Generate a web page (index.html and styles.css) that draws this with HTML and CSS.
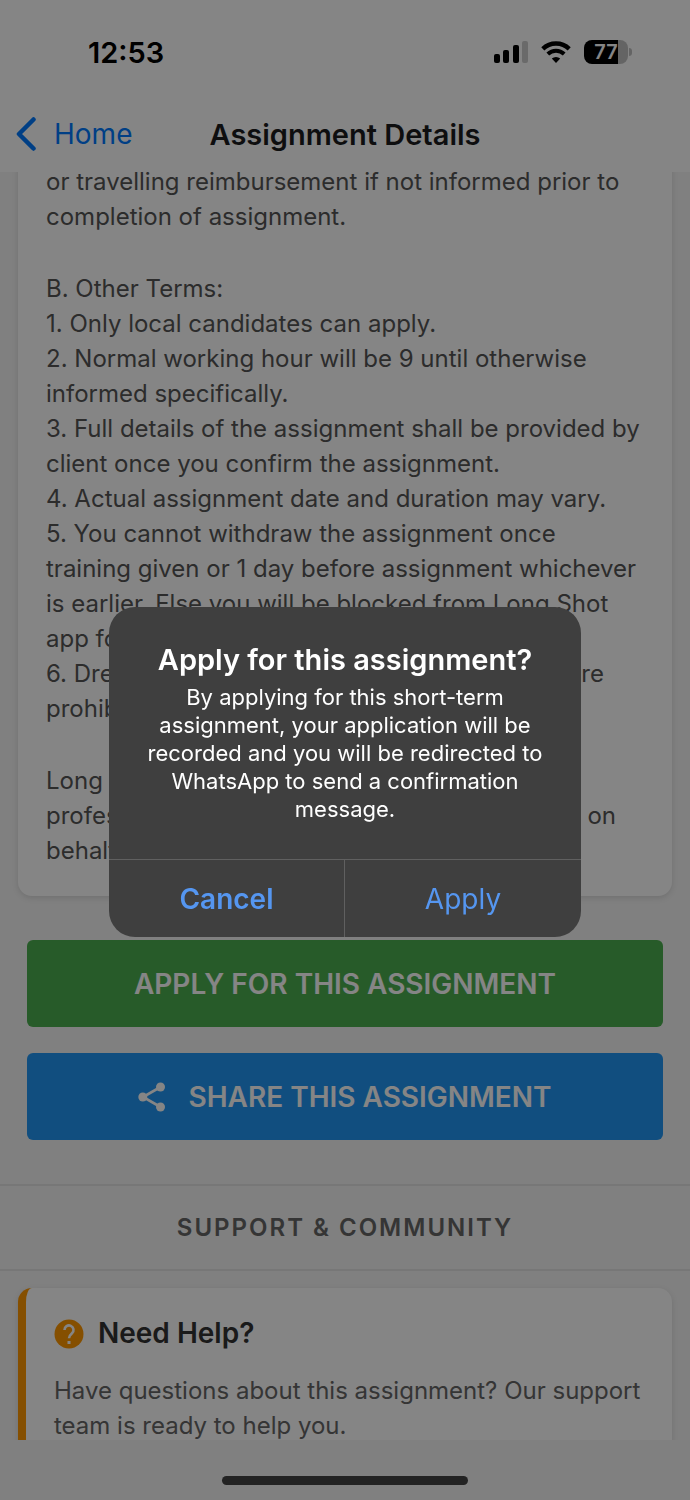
FILE: index.html
```html
<!DOCTYPE html>
<html lang="en">

<head>
    <meta charset="UTF-8" />
    <meta name="viewport" content="width=device-width, initial-scale=1.0" />
    <title>Assignment Details</title>
    <link rel="stylesheet" href="styles.css">
</head>

<body>
    <!-- Status bar -->
    <div class="status-bar">
        <span class="time">12:53</span>
        <div class="status-icons">
            <svg width="34" height="22" viewBox="0 0 34 22">
                <rect x="0" y="13" width="6" height="9" rx="2" />
                <rect x="9" y="9" width="6" height="13" rx="2" />
                <rect x="19" y="4" width="6" height="18" rx="2" />
                <rect x="28" y="0" width="6" height="22" rx="2" fill="#000" opacity="0.2" />
            </svg>
            <svg width="30" height="22" viewBox="0 0 30 22">
                <path d="M1.800 7.800a19 19 0 0 1 26.400 0" fill="none" stroke="#000" stroke-width="4.400" />
                <path d="M6.800 13a12 12 0 0 1 16.400 0" fill="none" stroke="#000" stroke-width="4" />
                <path d="M15 22l-4.200-4.400a6.200 6.200 0 0 1 8.400 0z" />
            </svg>
            <div class="battery"><span>77</span></div>
        </div>
    </div>

    <!-- Navigation -->
    <header class="nav-bar">
        <a class="back" href="#">
            <svg width="20" height="34" viewBox="0 0 20 34">
                <path d="M17.500 2.500L3 17l14.500 14.500" fill="none" stroke="currentColor" stroke-width="4.500" stroke-linecap="round" stroke-linejoin="round" />
            </svg>
            Home
        </a>
        <h1>Assignment Details</h1>
    </header>

    <main class="content">
        <section class="card terms">
            <p>or travelling reimbursement if not informed prior to<br />completion of assignment.</p>
            <div>
                <p>B. Other Terms:</p>
                <p>1. Only local candidates can apply.</p>
                <p>2. Normal working hour will be 9 until otherwise<br />informed specifically.</p>
                <p>3. Full details of the assignment shall be provided by<br />client once you confirm the assignment.</p>
                <p>4. Actual assignment date and duration may vary.</p>
                <p>5. You cannot withdraw the assignment once<br />training given or 1 day before assignment whichever<br />is earlier. Else you will be blocked from Long Shot<br />app for future.</p>
                <p class="split"><span>6. Dress code</span><span class="end-are">are</span></p>
                <p>prohibited.</p>
            </div>
            <div>
                <p>Long Shot</p>
                <p class="split"><span>professional</span><span class="end-on">on</span></p>
                <p>behalf.</p>
            </div>
        </section>

        <div class="actions">
            <button class="btn btn-apply">APPLY FOR THIS ASSIGNMENT</button>
            <button class="btn btn-share">
                <svg width="28" height="30" viewBox="0 0 28 30">
                    <path d="M22.500 5L5 15l17.500 10" fill="none" stroke="currentColor" stroke-width="2.600" />
                    <circle cx="22.500" cy="5" r="4.500" />
                    <circle cx="4.800" cy="15" r="4.500" />
                    <circle cx="22.500" cy="25" r="4.500" />
                </svg>
                SHARE THIS ASSIGNMENT
            </button>
        </div>

        <h2 class="section-title">SUPPORT &amp; COMMUNITY</h2>

        <section class="card help">
            <h3>
                <svg width="30" height="30" viewBox="0 0 30 30">
                    <circle cx="15" cy="15" r="14.500" fill="#ff9800" />
                    <path d="M10.500 11a4.500 4.500 0 1 1 7.500 3.300c-1.800 1.600-3 2.400-3 5" fill="none" stroke="#fff" stroke-width="2.600" />
                    <rect x="13.500" y="22" width="3" height="3" fill="#fff" />
                </svg>
                Need Help?
            </h3>
            <p>Have questions about this assignment? Our support<br />team is ready to help you.</p>
        </section>
    </main>

    <footer class="home-area">
        <div class="home-indicator"></div>
    </footer>

    <!-- Confirmation dialog -->
    <div class="backdrop">
        <div class="dialog" role="alertdialog" aria-labelledby="dialogTitle" aria-describedby="dialogText">
            <div class="dialog-body">
                <h2 id="dialogTitle">Apply for this assignment?</h2>
                <p id="dialogText">By applying for this short-term<br />assignment, your application will be<br />recorded and you will be redirected to<br />WhatsApp to send a confirmation<br />message.</p>
            </div>
            <div class="dialog-actions">
                <button class="cancel">Cancel</button>
                <button>Apply</button>
            </div>
        </div>
    </div>
</body>

</html>
```

FILE: styles.css
```css
:root {
    --bg-color: #f5f5f5;
    --surface: #ffffff;
    --text-color: #555;
    --heading-color: #333;
    --link: #007aff;
    --green: #4caf50;
    --blue: #2196f3;
    --orange: #ff9800;
    --line: #e4e4e4;
    --battery-rest: #c0c0c0;
    --dialog-bg: #3f3f3f;
    --dialog-line: #606060;
    --dialog-link: #5596f0;
}

* {
    box-sizing: border-box;
}

body {
    font-family: Inter, "Liberation Sans", sans-serif;
    margin: 0;
    background: var(--bg-color);
    color: var(--text-color);
    font-size: 24px;
    line-height: 35px;
    display: flex;
    flex-direction: column;
    height: 100vh;
    overflow: hidden;
}

h1,
h2,
h3,
p {
    margin: 0;
}

button {
    font-family: inherit;
    border: none;
    cursor: pointer;
}

.status-bar {
    display: flex;
    justify-content: space-between;
    align-items: center;
    background: var(--surface);
    color: #000;
    padding: 32px 62px 28px 88px;
    height: 100px;
    flex: none;
}

.time {
    font-size: 29px;
    font-weight: 600;
}

.status-icons {
    display: flex;
    align-items: center;
    gap: 13px;
}

.battery {
    position: relative;
    width: 44px;
    height: 24px;
    border-radius: 8px;
    background: linear-gradient(90deg, #000 78%, var(--battery-rest) 78%);
    color: #fff;
    font-size: 20px;
    font-weight: 600;
    line-height: 24px;
    text-align: center;
}

.battery::after {
    content: "";
    position: absolute;
    left: 45px;
    top: 8px;
    width: 3px;
    height: 8px;
    border-radius: 0 4px 4px 0;
    background: var(--battery-rest);
}

.nav-bar {
    display: grid;
    grid-template-columns: 1fr auto 1fr;
    align-items: center;
    background: var(--surface);
    height: 72px;
    padding: 0 16px 4px;
    flex: none;
}

.nav-bar h1 {
    font-size: 29px;
    font-weight: 600;
    color: #1c1c1e;
}

.back {
    display: flex;
    align-items: center;
    gap: 18px;
    color: var(--link);
    font-size: 28px;
    text-decoration: none;
}

.content {
    flex: 1;
    min-height: 0;
    overflow: hidden;
}

.card {
    background: var(--surface);
    margin: 0 18px;
    border-radius: 14px;
    box-shadow: 0 2px 6px rgba(0, 0, 0, 0.12);
}

/* scrolled part way under the navigation bar */
.terms {
    display: flex;
    flex-direction: column;
    gap: 37px;
    margin-top: -8px;
    padding: 0 28px 28px;
    border-radius: 0 0 14px 14px;
}

.split {
    display: flex;
    justify-content: space-between;
}

.end-are {
    padding-right: 40px;
}

.end-on {
    padding-right: 28px;
}

.actions {
    display: flex;
    flex-direction: column;
    gap: 26px;
    padding: 44px 27px;
}

.btn {
    display: flex;
    align-items: center;
    justify-content: center;
    gap: 22px;
    height: 87px;
    border-radius: 6px;
    color: #fff;
    fill: #fff;
    font-size: 28px;
    font-weight: 600;
}

.btn-apply {
    background: var(--green);
}

.btn-share {
    background: var(--blue);
}

.section-title {
    border-top: 2px solid var(--line);
    border-bottom: 2px solid var(--line);
    padding: 24px 0;
    text-align: center;
    font-size: 24px;
    font-weight: 600;
    letter-spacing: 2px;
    color: #666;
}

.help {
    margin-top: 17px;
    padding: 28px 28px 40px;
    border-left: 8px solid var(--orange);
}

.help h3 {
    display: flex;
    align-items: center;
    gap: 14px;
    font-size: 28px;
    font-weight: 600;
    color: var(--heading-color);
    margin-bottom: 22px;
}

.help p {
    color: #666;
}

.home-area {
    display: flex;
    justify-content: center;
    height: 60px;
    padding-top: 36px;
    flex: none;
}

.home-indicator {
    width: 246px;
    height: 9px;
    border-radius: 5px;
    background: #444;
}

.backdrop {
    position: fixed;
    inset: 0;
    display: flex;
    align-items: center;
    justify-content: center;
    padding-top: 44px;
    background: rgba(0, 0, 0, 0.48);
}

.dialog {
    width: 472px;
    border-radius: 26px;
    background: var(--dialog-bg);
    color: #fff;
    overflow: hidden;
}

.dialog-body {
    padding: 36px 24px;
    text-align: center;
}

.dialog-body h2 {
    font-size: 29px;
    font-weight: 600;
    line-height: 34px;
    margin-bottom: 6px;
}

.dialog-body p {
    font-size: 22px;
    line-height: 28px;
}

.dialog-actions {
    display: grid;
    grid-template-columns: 1fr 1fr;
    border-top: 1px solid var(--dialog-line);
}

.dialog-actions button {
    height: 77px;
    background: none;
    color: var(--dialog-link);
    font-size: 28px;
}

.dialog-actions .cancel {
    font-weight: 600;
    border-right: 1px solid var(--dialog-line);
}
```
